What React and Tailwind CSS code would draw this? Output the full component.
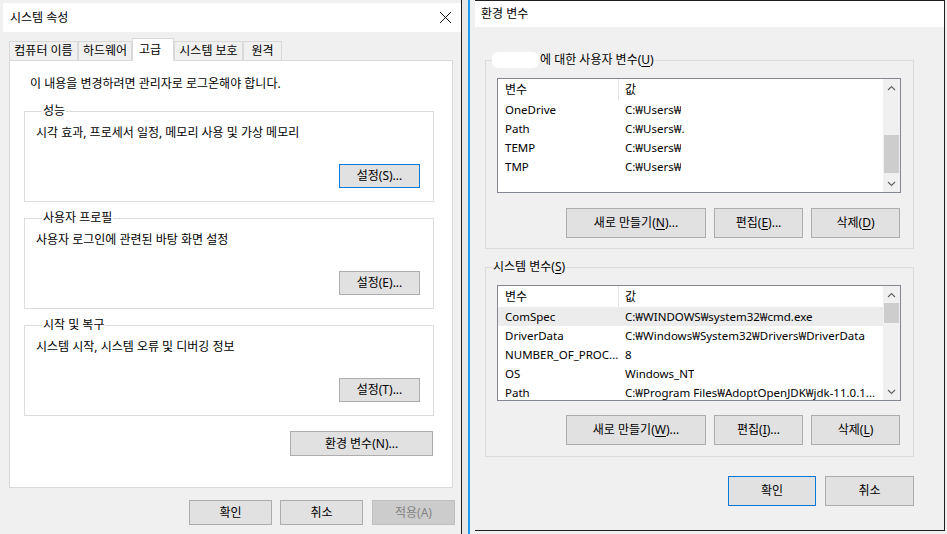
import clsx from 'clsx';

const FONT = "font-['Noto_Sans','Noto_Sans_CJK_KR',sans-serif]";

function Btn({ children, className = '', focus, disabled }) {
  return (
    <div
      className={clsx(
        'flex items-center justify-center border text-[12px] whitespace-nowrap',
        disabled
          ? 'border-[#bfbfbf] bg-[#cccccc] text-[#838383]'
          : focus
            ? 'border-[#0078d7] bg-[#e1e1e1] text-black'
            : 'border-[#adadad] bg-[#e1e1e1] text-black',
        className
      )}
    >
      {children}
    </div>
  );
}

// 밑줄 친 단축키 글자
const U = ({ children }) => <span className="underline underline-offset-2">{children}</span>;

function Group({ legend, text, button, focus }) {
  return (
    <fieldset className="w-[410px] border border-[#dcdcdc] px-[11px] pb-[13px]">
      <legend className="ml-[6px] px-[1px] text-[12px] leading-[16px]">{legend}</legend>
      <p className="pt-[6px] text-[12px] leading-[16px]">{text}</p>
      <div className="mt-[23px] flex justify-end pr-[2px]">
        <Btn focus={focus} className="h-[24px] w-[81px]">{button}</Btn>
      </div>
    </fieldset>
  );
}

function Chevron({ up }) {
  return (
    <div className="flex h-[17px] items-center justify-center">
      <svg width="9" height="6" viewBox="0 0 9 6">
        <path
          d={up ? 'M1 5 L4.5 1.5 L8 5' : 'M1 1 L4.5 4.5 L8 1'}
          fill="none"
          stroke="#606060"
          strokeWidth="1.1"
        />
      </svg>
    </div>
  );
}

function VarList({ rows, height, thumbTop, thumbHeight, selected }) {
  return (
    <div className={clsx('ml-[11px] flex w-[404px] border border-[#828790] bg-white', height)}>
      <div className="flex min-w-0 flex-1 flex-col overflow-hidden">
        <div className="flex h-[21px] shrink-0 items-center text-[12px]">
          <div className="h-full w-[121px] border-r border-[#e5e5e5] pl-[7px] leading-[21px]">변수</div>
          <div className="pl-[6px]">값</div>
        </div>
        {rows.map(([name, value], i) => (
          <div
            key={name}
            className={clsx(
              'flex h-[19px] shrink-0 items-center whitespace-nowrap text-[11.5px]',
              selected === i && 'bg-[#ececec]'
            )}
          >
            <div className="w-[121px] shrink-0 overflow-hidden pl-[7px]">{name}</div>
            <div className="overflow-hidden pl-[6px]">{value}</div>
          </div>
        ))}
      </div>
      <div className="flex w-[17px] shrink-0 flex-col bg-[#f0f0f0]">
        <Chevron up />
        <div className="flex-1">
          <div className={clsx('mx-[1px] bg-[#cdcdcd]', thumbTop, thumbHeight)} />
        </div>
        <Chevron />
      </div>
    </div>
  );
}

const userRows = [
  ['OneDrive', 'C:₩Users₩'],
  ['Path', 'C:₩Users₩.'],
  ['TEMP', 'C:₩Users₩'],
  ['TMP', 'C:₩Users₩'],
];

const systemRows = [
  ['ComSpec', 'C:₩WINDOWS₩system32₩cmd.exe'],
  ['DriverData', 'C:₩Windows₩System32₩Drivers₩DriverData'],
  ['NUMBER_OF_PROC...', '8'],
  ['OS', 'Windows_NT'],
  ['Path', 'C:₩Program Files₩AdoptOpenJDK₩jdk-11.0.1...'],
];

const tabs = [
  ['컴퓨터 이름', 'w-[69px]'],
  ['하드웨어', 'w-[54px]'],
  ['고급', 'w-[42px]'],
  ['시스템 보호', 'w-[69px]'],
  ['원격', 'w-[39px]'],
];

export default function App() {
  return (
    <div className={clsx('flex h-[534px] w-[947px] overflow-hidden bg-[#f0f0f0] text-black', FONT)}>
      {/* 시스템 속성 */}
      <div className="flex h-full w-[462px] shrink-0 flex-col border-r border-[#1b1b1b] pl-[3px] pt-[3px]">
        <div className="flex h-[29px] shrink-0 items-center justify-between bg-white pl-[7px] pr-[9px]">
          <span className="text-[12px]">시스템 속성</span>
          <svg width="13" height="13" viewBox="0 0 13 13">
            <path d="M1 1 L12 12 M12 1 L1 12" stroke="#111" strokeWidth="1" />
          </svg>
        </div>
        <div className="flex flex-1 flex-col pl-[6px] pt-[6px]">
          <div className="flex h-[22px] items-end">
            {tabs.map(([label, w]) =>
              label === '고급' ? (
                <div
                  key={label}
                  className={clsx(
                    'relative z-10 -mb-px flex h-[23px] items-center border border-b-0 border-[#d9d9d9] bg-white pl-[6px] text-[12px]',
                    w
                  )}
                >
                  {label}
                </div>
              ) : (
                <div
                  key={label}
                  className={clsx(
                    'flex h-[19px] items-center justify-center border border-b-0 border-[#d9d9d9] bg-[#f0f0f0] text-[12px]',
                    w
                  )}
                >
                  {label}
                </div>
              )
            )}
          </div>
          <div className="flex h-[428px] w-[444px] flex-col border border-[#d9d9d9] bg-white px-[14px] pt-[15px]">
            <p className="pl-[6px] text-[12px] leading-[16px]">이 내용을 변경하려면 관리자로 로그온해야 합니다.</p>
            <div className="mt-[11px] flex flex-col gap-[8px]">
              <Group legend="성능" text="시각 효과, 프로세서 일정, 메모리 사용 및 가상 메모리" button="설정(S)..." focus />
              <Group legend="사용자 프로필" text="사용자 로그인에 관련된 바탕 화면 설정" button="설정(E)..." />
              <Group legend="시작 및 복구" text="시스템 시작, 시스템 오류 및 디버깅 정보" button="설정(T)..." />
            </div>
            <div className="mt-[15px] flex w-[410px] justify-end pr-[1px]">
              <Btn className="h-[25px] w-[143px]">환경 변수(N)...</Btn>
            </div>
          </div>
          <div className="mt-[12px] flex justify-end gap-[8px] pr-[6px]">
            <Btn className="h-[25px] w-[83px]">확인</Btn>
            <Btn className="h-[25px] w-[83px]">취소</Btn>
            <Btn disabled className="ml-px h-[25px] w-[83px]">적용(A)</Btn>
          </div>
        </div>
      </div>

      {/* 창 사이 배경 */}
      <div className="h-full w-[6px] shrink-0 bg-[#e6e6e6]" />
      <div className="h-full w-[2px] shrink-0 bg-[#1a9cf0]" />
      <div className="h-full w-[5px] shrink-0 bg-[#f0f0f0]" />

      {/* 환경 변수 */}
      <div className="flex h-[531px] w-[470px] shrink-0 flex-col border-y border-r border-[#1f1f1f]">
        <div className="flex h-[26px] shrink-0 items-center bg-white pl-[6px] text-[12px]">환경 변수</div>
        <div className="flex flex-1 flex-col pl-[10px] pt-[25px]">
          <fieldset className="w-[429px] border border-[#dcdcdc] pb-[10px]">
            <legend className="ml-[6px] flex items-center text-[12px] leading-[16px]">
              <span className="mr-[1px] inline-block h-[16px] w-[47px] rounded-[6px] bg-white" />
              에 대한 사용자 변수(<U>U</U>)
            </legend>
            <div className="mt-[10px]">
              <VarList rows={userRows} height="h-[115px]" thumbTop="mt-[39px]" thumbHeight="h-[38px]" />
            </div>
            <div className="mt-[15px] flex justify-end gap-[8px] pr-[13px]">
              <Btn className="h-[30px] w-[140px]">새로 만들기(<U>N</U>)...</Btn>
              <Btn className="h-[30px] w-[89px]">편집(<U>E</U>)...</Btn>
              <Btn className="h-[30px] w-[89px]">삭제(<U>D</U>)</Btn>
            </div>
          </fieldset>

          <fieldset className="mt-[10px] w-[429px] border border-[#dcdcdc] pb-[11px]">
            <legend className="ml-[6px] px-[1px] text-[12px] leading-[16px]">
              시스템 변수(<U>S</U>)
            </legend>
            <div className="mt-[10px]">
              <VarList rows={systemRows} height="h-[116px]" thumbTop="mt-0" thumbHeight="h-[20px]" selected={0} />
            </div>
            <div className="mt-[14px] flex justify-end gap-[8px] pr-[13px]">
              <Btn className="h-[30px] w-[140px]">새로 만들기(<U>W</U>)...</Btn>
              <Btn className="h-[30px] w-[89px]">편집(<U>I</U>)...</Btn>
              <Btn className="h-[30px] w-[89px]">삭제(<U>L</U>)</Btn>
            </div>
          </fieldset>

          <div className="mt-[19px] flex justify-end gap-[9px] pr-[30px]">
            <Btn focus className="h-[30px] w-[88px]">확인</Btn>
            <Btn className="h-[30px] w-[89px]">취소</Btn>
          </div>
        </div>
      </div>
    </div>
  );
}
